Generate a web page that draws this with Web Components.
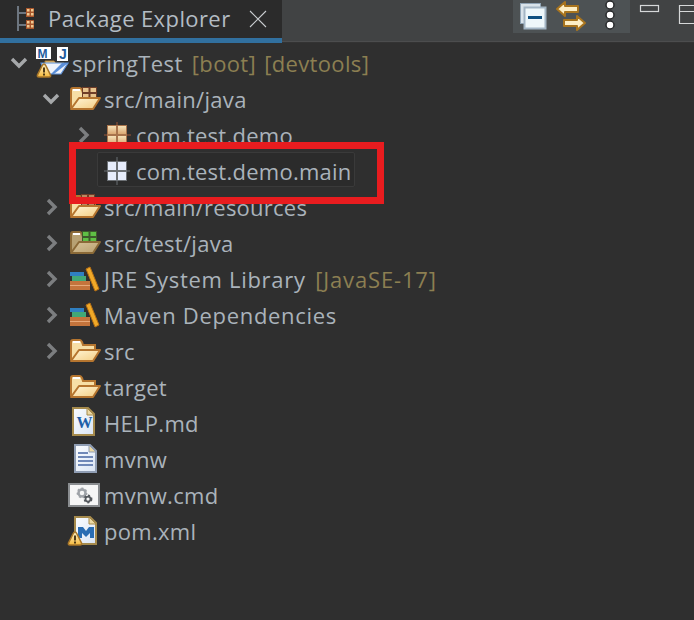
<!DOCTYPE html>
<html>
<head>
<meta charset="utf-8">
<title>Package Explorer</title>
<style>
    html, body { margin: 0; height: 100%; background: #2f2f2f; }
    body { overflow: hidden; font-family: "Open Sans", "Noto Sans", sans-serif; }
</style>
</head>
<body>
<template id="tpl-view">
    <style>
        :host { display: block; width: 694px; height: 620px; background: #2f2f2f; overflow: hidden; }
        .cabecera { display: flex; height: 38px; background: #414344; }
        .pestana { display: flex; align-items: center; width: 282px; height: 38px; background: #2b2b2b; box-sizing: border-box; padding-left: 16px; flex: none; }
        .pestana svg { display: block; }
        .titulo { margin-left: 12px; padding-bottom: 2px; font-size: 22px; color: #b3bcc4; white-space: nowrap; letter-spacing: 0.4px; }
        .cerrar { margin-left: 18px; }
        .barra { display: flex; flex: 1; align-items: flex-start; padding-left: 231px; }
        .linea { display: flex; height: 5px; }
        .linea i { display: block; width: 282px; background: #31709f; }
        .linea b { display: block; flex: 1; background: linear-gradient(#414344 0 3px, #4c4d4e 3px 4px, #333 4px); }
        .herramientas { display: flex; width: 117px; height: 33px; background: #4d5254; flex: none; }
        .ventana { display: flex; flex: none; }
        .cuerpo { position: relative; padding-top: 3px; }
    </style>
    <div class="cabecera">
        <div class="pestana">
            <svg width="20" height="28" viewBox="0 0 20 28">
                <path d="M2 1v25M2 8h8M2 20h8" stroke="#6d7680" stroke-width="2" fill="none"/>
                <g fill="#a9562b"><rect x="10" y="3" width="8" height="9"/><rect x="10" y="15" width="8" height="9"/></g>
                <g fill="#f0c890"><rect x="11" y="4" width="2.5" height="2.5"/><rect x="15" y="4" width="2.5" height="2.5"/><rect x="11" y="8" width="2.5" height="2.5"/><rect x="15" y="8" width="2.5" height="2.5"/><rect x="11" y="16" width="2.5" height="2.5"/><rect x="15" y="16" width="2.5" height="2.5"/><rect x="11" y="20" width="2.5" height="2.5"/><rect x="15" y="20" width="2.5" height="2.5"/></g>
            </svg>
            <span class="titulo">Package Explorer</span>
            <svg class="cerrar" width="18" height="18" viewBox="0 0 18 18"><path d="M1 1l16 16M17 1L1 17" stroke="#c9cdd0" stroke-width="1.1" fill="none"/></svg>
        </div>
        <div class="barra">
            <div class="herramientas">
                <svg width="117" height="33" viewBox="0 0 117 33">
                    <rect x="7.5" y="3.5" width="20" height="20" fill="#d9e3ea" stroke="#8fa3b4"/>
                    <rect x="11.5" y="7.5" width="21" height="21" fill="#eef7fa" stroke="#a3b5c4" stroke-width="2"/>
                    <rect x="15" y="16" width="14" height="3" fill="#0e4f80"/>
                    <path d="M44 9l8-7v4h13v6H52v4z" fill="#fdeec4" stroke="#a8741e" stroke-width="2" stroke-linejoin="round"/>
                    <path d="M72 23l-8 7v-4H51v-6h13v-4z" fill="#fdeec4" stroke="#a8741e" stroke-width="2" stroke-linejoin="round"/>
                    <g fill="#fff" stroke="#26282a" stroke-width="1.5"><circle cx="97" cy="5" r="4"/><circle cx="97" cy="15" r="4"/><circle cx="97" cy="25" r="4"/></g>
                </svg>
            </div>
            <svg class="ventana" width="64" height="33" viewBox="0 0 64 33">
                <rect x="10.5" y="5.5" width="18" height="6" fill="none" stroke="#d6d8d9" stroke-width="1.2"/>
                <path d="M64 5.5H49.5v18H64M49.5 11.5H64" fill="none" stroke="#d6d8d9" stroke-width="1.2"/>
            </svg>
        </div>
    </div>
    <div class="linea"><i></i><b></b></div>
    <div class="cuerpo"><slot></slot></div>
</template>

<template id="tpl-row">
    <style>
        :host { display: flex; align-items: center; position: relative; height: 36px; font-size: 22px; color: #aab3bb; white-space: nowrap; }
        .flecha { width: 28px; height: 36px; flex: none; }
        .icono { width: 36px; height: 36px; flex: none; }
        svg { display: block; overflow: visible; }
        .texto { display: block; padding-bottom: 2px; letter-spacing: var(--ls, 0.7px); }
        .deco { color: #8c7f52; padding-bottom: 2px; margin-left: 1px; letter-spacing: var(--lsd, 0.85px); word-spacing: 2px; }
    </style>
    <span class="flecha"></span>
    <span class="icono"></span>
    <span class="texto"><slot></slot></span>
    <span class="deco"></span>
</template>

<template id="tpl-box">
    <style>
        :host { position: absolute; z-index: 2; display: block; box-sizing: border-box; border: 7px solid #e81c1f; }
    </style>
</template>

<script>
// piezas sueltas de los iconos, en coordenadas de la caja de 36x36
const degradados = `
    <defs>
        <linearGradient id="frente" x1="0" y1="0" x2="1" y2="1"><stop offset="0" stop-color="#fff6d8"/><stop offset="1" stop-color="#f3cc80"/></linearGradient>
        <linearGradient id="frenteT" x1="0" y1="0" x2="1" y2="1"><stop offset="0" stop-color="#d8c49a"/><stop offset="1" stop-color="#b9a070"/></linearGradient>
        <linearGradient id="celda" x1="0" y1="0" x2="0" y2="1"><stop offset="0" stop-color="#f6e2b8"/><stop offset="1" stop-color="#dba873"/></linearGradient>
        <linearGradient id="papel" x1="0" y1="0" x2="1" y2="1"><stop offset="0" stop-color="#fbfdff"/><stop offset="1" stop-color="#d9e4f4"/></linearGradient>
        <linearGradient id="aviso" x1="0" y1="0" x2="0" y2="1"><stop offset="0" stop-color="#fff3c8"/><stop offset="1" stop-color="#f6b93c"/></linearGradient>
    </defs>`;

const carpeta = (medio = '', fondo = '#f7dfa6', frente = 'url(#frente)', borde = '#b5752f') => `
    <path d="M3 26V8q0-2 2-2h7q1 0 2 2l1 3h12v6" fill="${fondo}" stroke="${borde}" stroke-width="2"/>
    <path d="M5 8h7" stroke="#fff" stroke-width="2"/>
    ${medio}
    <path d="M3 27l8-11h21l-7 11z" fill="${frente}" stroke="${borde}" stroke-width="2" stroke-linejoin="round"/>`;

// rejilla 2x2 de paquete, con hueco de 2 entre celdas
const rejilla = (x, y, ancho, alto, borde, celda) => {
    const w = (ancho - 4) / 2;
    const h = (alto - 4) / 2;
    return `<rect x="${x}" y="${y}" width="${ancho}" height="${alto}" fill="${borde}"/>
        <rect x="${x + 1}" y="${y + 1}" width="${w}" height="${h}" fill="${celda}"/>
        <rect x="${x + 3 + w}" y="${y + 1}" width="${w}" height="${h}" fill="${celda}"/>
        <rect x="${x + 1}" y="${y + 3 + h}" width="${w}" height="${h}" fill="${celda}"/>
        <rect x="${x + 3 + w}" y="${y + 3 + h}" width="${w}" height="${h}" fill="${celda}"/>`;
};

const aviso = (x, y) => `
    <path d="M${x + 7} ${y + 1}q1 0 2 2l4.500 9q.5 2-1.500 2h-10q-2 0-1.500-2l4.500-9q1-2 2-2z" fill="url(#aviso)" stroke="#a9772a" stroke-width="1.6"/>
    <path d="M${x + 7} ${y + 4.500}v5M${x + 7} ${y + 10.500}v2" stroke="#3a2a10" stroke-width="1.8"/>`;

const libros = `
    <rect x="2" y="10" width="14" height="4" fill="#2f7fc1"/>
    <rect x="4" y="14" width="14" height="5" fill="#41a877"/>
    <rect x="2" y="19" width="20" height="9" fill="#c4743c"/>
    <path d="M2 23.500h20" stroke="#e7a878"/>
    <path d="M18 7l4-2 9 22-4 2z" fill="#f0a928" stroke="#b56f14"/>`;

const hoja = (x, y, borde) => `
    <path d="M${x} ${y}h15l6 6v21h-21z" fill="url(#papel)" stroke="${borde}" stroke-width="2"/>
    <path d="M${x + 14} ${y}v7h7z" fill="#ecd9a4" stroke="${borde}"/>`;

const engranaje = (cx, cy, r, color) => `
    <circle cx="${cx}" cy="${cy}" r="${r}" fill="none" stroke="${color}" stroke-width="${r * 0.7}"/>
    <circle cx="${cx}" cy="${cy}" r="${r + 1}" fill="none" stroke="${color}" stroke-width="1.800" stroke-dasharray="2 2"/>`;

const ICONOS = {
    proyecto: `
        <path d="M9 30V15h9l2 2h8v6" fill="#eecf8c" stroke="#a97a35"/>
        <path d="M10 28L5 17h27l-7 11z" fill="#eef3fb" stroke="#5b8fd8" stroke-width="1.200"/>
        <path d="M18 28l14-11h-6l-11 11z" fill="#5b8fd8"/>
        <rect x="0" y="1" width="15" height="12" fill="#fff"/>
        <text x="1.500" y="11.500" font-family="Liberation Sans" font-weight="700" font-size="12" fill="#1f5c9c">M</text>
        <rect x="21" y="1" width="11" height="14" fill="#fff"/>
        <text x="23" y="13" font-family="Liberation Sans" font-weight="700" font-size="14" fill="#1f5c9c">J</text>
        ${aviso(1, 17)}`,
    fuente: carpeta(rejilla(14, 5, 15, 12, '#6f3d28', '#e7c38d')),
    recursos: carpeta(rejilla(13, 4, 14, 12, '#6f3d28', '#b98a62')),
    prueba: carpeta(rejilla(14, 5, 15, 12, '#3d5a2c', '#5fbf45'), '#b7a173', 'url(#frenteT)', '#8b6a38'),
    paquete: `<path d="M4 17h27M17 4v27" stroke="#7a4a34" stroke-width="1.500"/>` + rejilla(7, 7, 20, 20, '#a9744c', 'url(#celda)'),
    vacio: `<path d="M4 17h26M17 3v28" stroke="#56595c" stroke-width="1.500"/>` + rejilla(7, 7, 20, 20, '#6c7074', '#e6ecfb'),
    libreria: libros,
    carpeta: carpeta(),
    word: hoja(5, 2, '#a58a4c') + `<text x="8.500" y="22" font-family="Liberation Serif" font-weight="700" font-size="16" fill="#1e5ea8">W</text>`,
    texto: hoja(7, 3, '#8f9db3') + `<path d="M10 11h10M10 15h15M10 19h15M10 23h15" stroke="#6f88b8" stroke-width="2"/>`,
    cmd: `<rect x="1" y="6" width="30" height="22" fill="#f6f6f6" stroke="#8a8d90" stroke-width="2"/>
        ${engranaje(14, 15, 3.500, '#9fa3a8')}${engranaje(20, 21, 2.500, '#55595e')}`,
    pom: hoja(7, 3, '#a58a4c') + `<path d="M10 13h5l3 4 3-4h5v11h-4v-5l-4 4-4-4v5h-4z" fill="#2a6db3"/>` + aviso(0, 17)
};

class ExplorerView extends HTMLElement {
    constructor() {
        super();
        this.attachShadow({ mode: 'open' });
        this.shadowRoot.appendChild(document.getElementById('tpl-view').content.cloneNode(true));
    }
}

class TreeRow extends HTMLElement {
    constructor() {
        super();
        this.attachShadow({ mode: 'open' });
        this.shadowRoot.appendChild(document.getElementById('tpl-row').content.cloneNode(true));
    }

    connectedCallback() {
        const nivel = parseInt(this.getAttribute('nivel')) || 0;
        this.style.paddingLeft = (8 + nivel * 32) + 'px';

        const flecha = this.getAttribute('flecha');
        if (flecha === 'abierta') {
            this.shadowRoot.querySelector('.flecha').innerHTML = `<svg width="28" height="36"><path d="M4 13l7 7 7-7" fill="none" stroke="#a6a8aa" stroke-width="3.400"/></svg>`;
        } else if (flecha === 'cerrada') {
            this.shadowRoot.querySelector('.flecha').innerHTML = `<svg width="28" height="36"><path d="M8 10l7 7-7 7" fill="none" stroke="#7c7e80" stroke-width="3.400"/></svg>`;
        }

        const icono = ICONOS[this.getAttribute('icono')] || '';
        this.shadowRoot.querySelector('.icono').innerHTML = `<svg width="36" height="36" viewBox="0 0 36 36">${degradados}${icono}</svg>`;

        const deco = this.getAttribute('deco');
        if (deco) {
            this.shadowRoot.querySelector('.deco').textContent = '\u00a0' + deco;
        }
    }
}

class MarkBox extends HTMLElement {
    constructor() {
        super();
        this.attachShadow({ mode: 'open' });
        this.shadowRoot.appendChild(document.getElementById('tpl-box').content.cloneNode(true));
    }
}

class SelectionBox extends HTMLElement {
    constructor() {
        super();
        this.attachShadow({ mode: 'open' }).innerHTML = `<style>
            :host { position: absolute; display: block; box-sizing: border-box; border: 1px solid #3a3a3a; background: #2b2b2b; border-radius: 2px; }
        </style>`;
    }
}

customElements.define('explorer-view', ExplorerView);
customElements.define('tree-row', TreeRow);
customElements.define('mark-box', MarkBox);
customElements.define('selection-box', SelectionBox);
</script>

<explorer-view>
    <selection-box style="left:97px;top:109px;width:258px;height:35px"></selection-box>
    <tree-row style="--ls:0.4px;--lsd:0.35px" flecha="abierta" icono="proyecto" deco="[boot] [devtools]">springTest</tree-row>
    <tree-row style="--ls:0.3px" nivel="1" flecha="abierta" icono="fuente">src/main/java</tree-row>
    <tree-row style="--ls:0.25px" nivel="2" flecha="cerrada" icono="paquete">com.test.demo</tree-row>
    <tree-row style="--ls:0.25px" nivel="2" icono="vacio">com.test.demo.main</tree-row>
    <tree-row style="--ls:0.25px" nivel="1" flecha="cerrada" icono="recursos">src/main/resources</tree-row>
    <tree-row style="--ls:0.3px" nivel="1" flecha="cerrada" icono="prueba">src/test/java</tree-row>
    <tree-row nivel="1" flecha="cerrada" icono="libreria" deco="[JavaSE-17]">JRE System Library</tree-row>
    <tree-row nivel="1" flecha="cerrada" icono="libreria">Maven Dependencies</tree-row>
    <tree-row style="--ls:0.3px" nivel="1" flecha="cerrada" icono="carpeta">src</tree-row>
    <tree-row style="--ls:0.3px" nivel="1" icono="carpeta">target</tree-row>
    <tree-row style="--ls:0.3px" nivel="1" icono="word">HELP.md</tree-row>
    <tree-row style="--ls:0.3px" nivel="1" icono="texto">mvnw</tree-row>
    <tree-row style="--ls:0.3px" nivel="1" icono="cmd">mvnw.cmd</tree-row>
    <tree-row style="--ls:0.3px" nivel="1" icono="pom">pom.xml</tree-row>
    <mark-box style="left:69px;top:99px;width:315px;height:62px"></mark-box>
</explorer-view>
</body>
</html>
